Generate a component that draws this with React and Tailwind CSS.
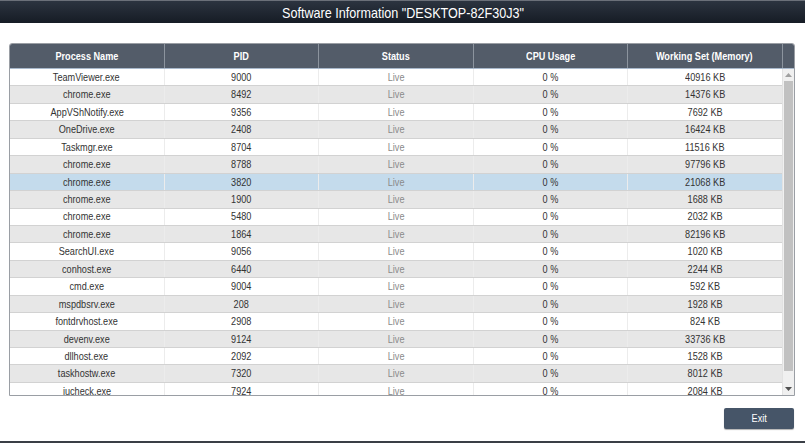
import React from 'react';

const rows = [
  ['TeamViewer.exe', 9000, 40916],
  ['chrome.exe', 8492, 14376],
  ['AppVShNotify.exe', 9356, 7692],
  ['OneDrive.exe', 2408, 16424],
  ['Taskmgr.exe', 8704, 11516],
  ['chrome.exe', 8788, 97796],
  ['chrome.exe', 3820, 21068],
  ['chrome.exe', 1900, 1688],
  ['chrome.exe', 5480, 2032],
  ['chrome.exe', 1864, 82196],
  ['SearchUI.exe', 9056, 1020],
  ['conhost.exe', 6440, 2244],
  ['cmd.exe', 9004, 592],
  ['mspdbsrv.exe', 208, 1928],
  ['fontdrvhost.exe', 2908, 824],
  ['devenv.exe', 9124, 33736],
  ['dllhost.exe', 2092, 1528],
  ['taskhostw.exe', 7320, 8012],
  ['jucheck.exe', 7924, 2084],
  ['javaw.exe', 6120, 3312],
];

const headers = ['Process Name', 'PID', 'Status', 'CPU Usage', 'Working Set (Memory)'];

// Arial Narrow look: Liberation Sans squeezed horizontally
function N({ children, className = '' }) {
  return <span className={`inline-block whitespace-nowrap scale-x-[0.83] ${className}`}>{children}</span>;
}

export default function App() {
  return (
    <div className="w-[805px] h-[443px] bg-white flex flex-col font-['Liberation_Sans',Arial,sans-serif] overflow-hidden">
      <div className="h-[23px] shrink-0 border-t border-[#6b7079] bg-gradient-to-b from-[#2c3440] to-[#161c25] flex items-center justify-center">
        <span className="inline-block whitespace-nowrap scale-x-[0.84] text-white text-[15px] leading-none">Software Information "DESKTOP-82F30J3"</span>
      </div>

      <div className="flex-1 flex flex-col px-[9px] pt-[20px]">
        <div className="w-[786px] h-[353px] border border-[#9a9ea4] rounded-t-[3px] flex flex-col overflow-hidden">
          <div className="h-[25px] shrink-0 flex bg-[#535c69] border-b border-[#a9b9cc]">
            {headers.map((h) => (
              <div key={h} className="w-[154.5px] shrink-0 border-r border-[#8c949e] flex items-center justify-center text-white text-[11px] font-bold">
                <N>{h}</N>
              </div>
            ))}
            <div className="flex-1" />
          </div>
          <div className="flex-1 flex min-h-0">
            <div className="w-[772px] overflow-hidden">
              {rows.map((r, i) => {
                const bg = i === 6 ? 'bg-[#c4dbec]' : i % 2 === 1 ? 'bg-[#e7e7e7]' : 'bg-white';
                return (
                  <div key={i} className={`h-[17.45px] flex border-b border-[#d2d2d2] text-[11px] text-[#333] ${bg}`}>
                    <div className="w-[154.5px] shrink-0 border-r border-[#ececec] flex items-center justify-center"><N>{r[0]}</N></div>
                    <div className="w-[154.5px] shrink-0 border-r border-[#ececec] flex items-center justify-center"><N>{r[1]}</N></div>
                    <div className="w-[154.5px] shrink-0 border-r border-[#ececec] flex items-center justify-center text-[#8a8a8a]"><N>Live</N></div>
                    <div className="w-[154.5px] shrink-0 border-r border-[#ececec] flex items-center justify-center"><N>0 %</N></div>
                    <div className="w-[154px] shrink-0 flex items-center justify-center"><N>{r[2]} KB</N></div>
                  </div>
                );
              })}
            </div>
            <div className="w-[12px] shrink-0 bg-[#f0f0f0] flex flex-col items-center border-l border-[#e2e2e2]">
              <div className="h-[12px] flex items-center justify-center">
                <svg width="7" height="4" viewBox="0 0 7 4"><path d="M0 4 L3.5 0 L7 4 Z" fill="#a0a0a0" /></svg>
              </div>
              <div className="w-[9px] h-[290px] bg-[#c1c1c1]" />
              <div className="flex-1" />
              <div className="h-[12px] flex items-center justify-center">
                <svg width="7" height="4" viewBox="0 0 7 4"><path d="M0 0 L7 0 L3.5 4 Z" fill="#505050" /></svg>
              </div>
            </div>
          </div>
        </div>

        <div className="flex justify-end mt-[12px] pr-[2px]">
          <button className="w-[70px] h-[21px] bg-[#465568] rounded-[2px] text-white text-[11px] flex items-center justify-center shadow-[0_1px_1px_rgba(0,0,0,0.3)]">
            <N>Exit</N>
          </button>
        </div>
      </div>

      <div className="h-[2px] shrink-0 bg-[#3a3f46]" />
    </div>
  );
}
